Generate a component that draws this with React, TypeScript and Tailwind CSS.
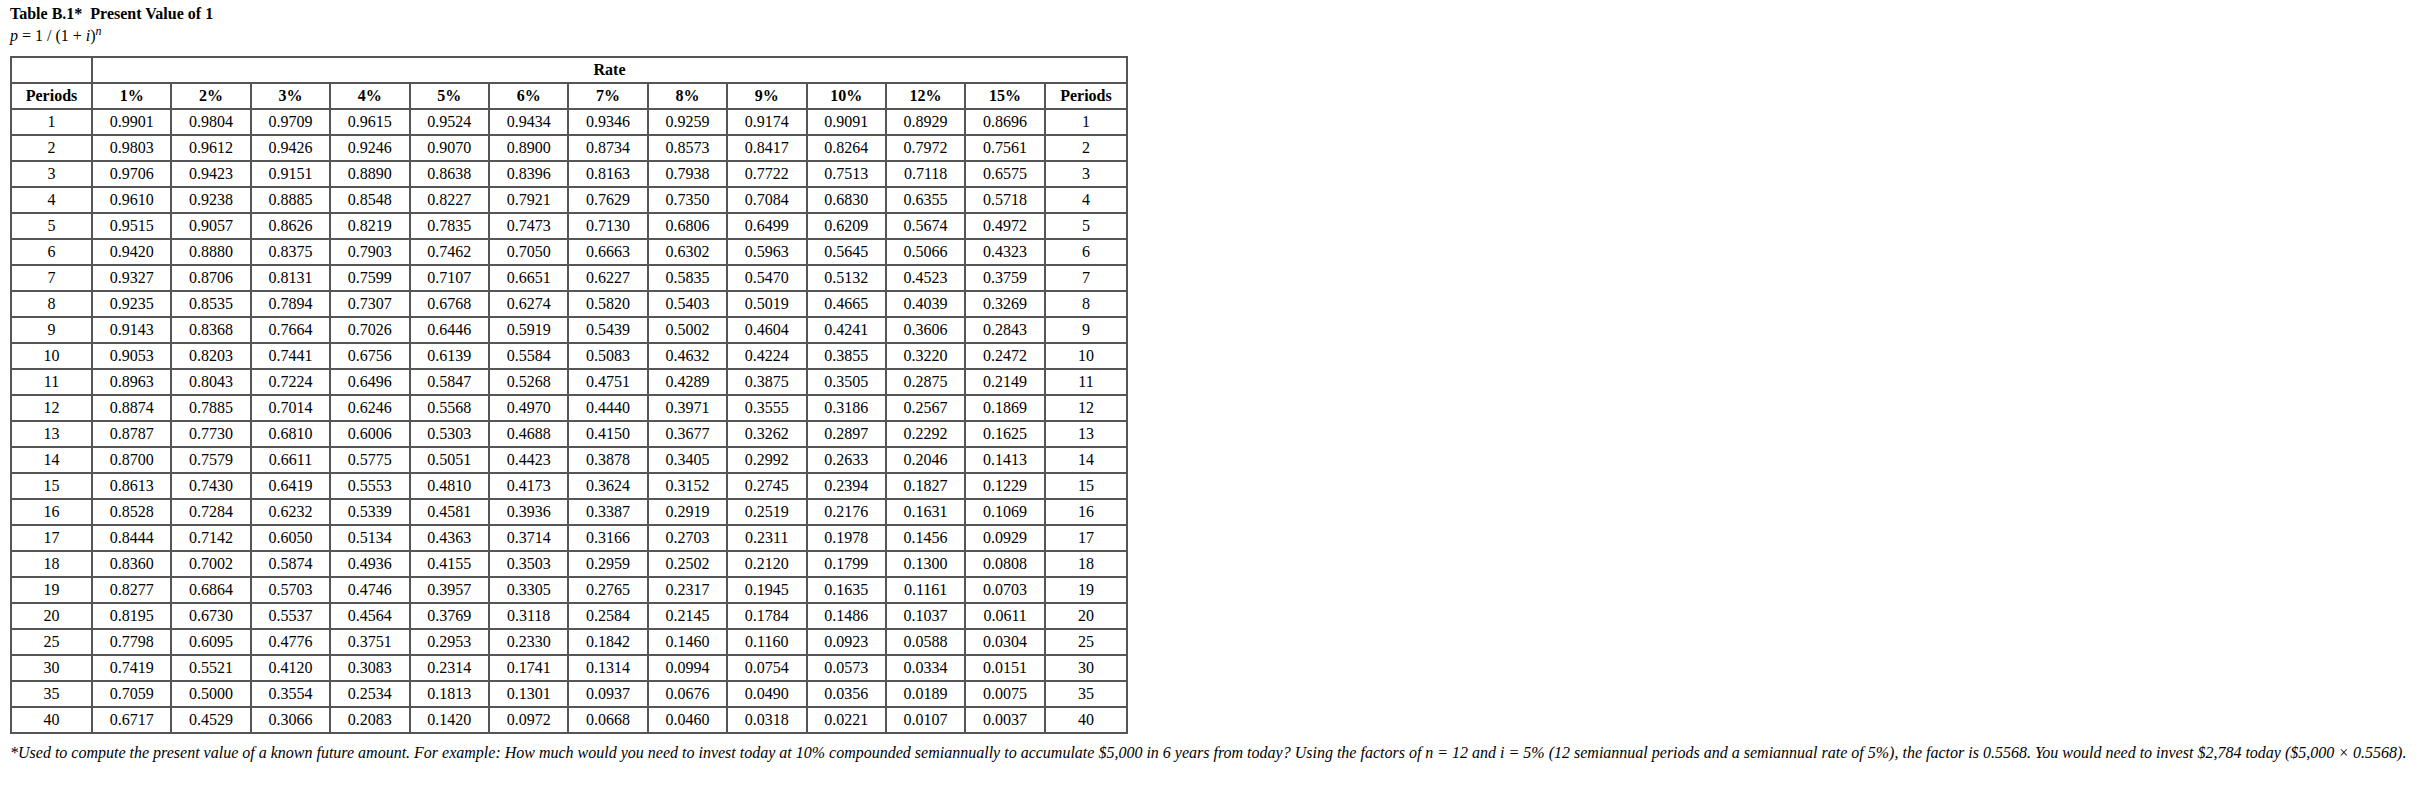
import React from 'react';

const rates = [1, 2, 3, 4, 5, 6, 7, 8, 9, 10, 12, 15];
const periods = [1, 2, 3, 4, 5, 6, 7, 8, 9, 10, 11, 12, 13, 14, 15, 16, 17, 18, 19, 20, 25, 30, 35, 40];

// p = 1 / (1 + i)^n, four places
const factor = (rate: number, n: number) => (1 / Math.pow(1 + rate / 100, n)).toFixed(4);

const cell = 'border-2 border-[#555] px-1 py-[3px] text-center leading-[18px]';

const App = () => {
  return (
    <div className="min-h-screen bg-white pl-[10px] pt-[3px] font-['Liberation_Serif','Times_New_Roman',serif] text-[16px] text-black">
      <div className="font-bold leading-[22px]">Table B.1*&nbsp; Present Value of 1</div>
      <div className="leading-[22px]">
        <i>p</i> = 1 / (1 + <i>i</i>)<sup><i>n</i></sup>
      </div>

      <table className="mt-[9px] w-[1118px] table-fixed border-collapse border-2 border-[#555]">
        <colgroup>
          <col className="w-[81px]" />
          {rates.map((r) => (
            <col key={r} />
          ))}
          <col className="w-[82px]" />
        </colgroup>
        <thead>
          <tr>
            <th className={cell}>&nbsp;</th>
            <th className={`${cell} font-bold`} colSpan={13}>
              Rate
            </th>
          </tr>
          <tr>
            <th className={`${cell} font-bold`}>Periods</th>
            {rates.map((r) => (
              <th key={r} className={`${cell} font-bold`}>
                {r}%
              </th>
            ))}
            <th className={`${cell} font-bold`}>Periods</th>
          </tr>
        </thead>
        <tbody>
          {periods.map((n) => (
            <tr key={n}>
              <td className={cell}>{n}</td>
              {rates.map((r) => (
                <td key={r} className={cell}>
                  {factor(r, n)}
                </td>
              ))}
              <td className={cell}>{n}</td>
            </tr>
          ))}
        </tbody>
      </table>

      <p className="mt-[10px] italic leading-[18px]">
        *Used to compute the present value of a known future amount. For example: How much would you need to invest
        today at 10% compounded semiannually to accumulate $5,000 in 6 years from today? Using the factors of n = 12 and
        i = 5% (12 semiannual periods and a semiannual rate of 5%), the factor is 0.5568. You would need to invest
        $2,784 today ($5,000 × 0.5568).
      </p>
    </div>
  );
};

export default App;
